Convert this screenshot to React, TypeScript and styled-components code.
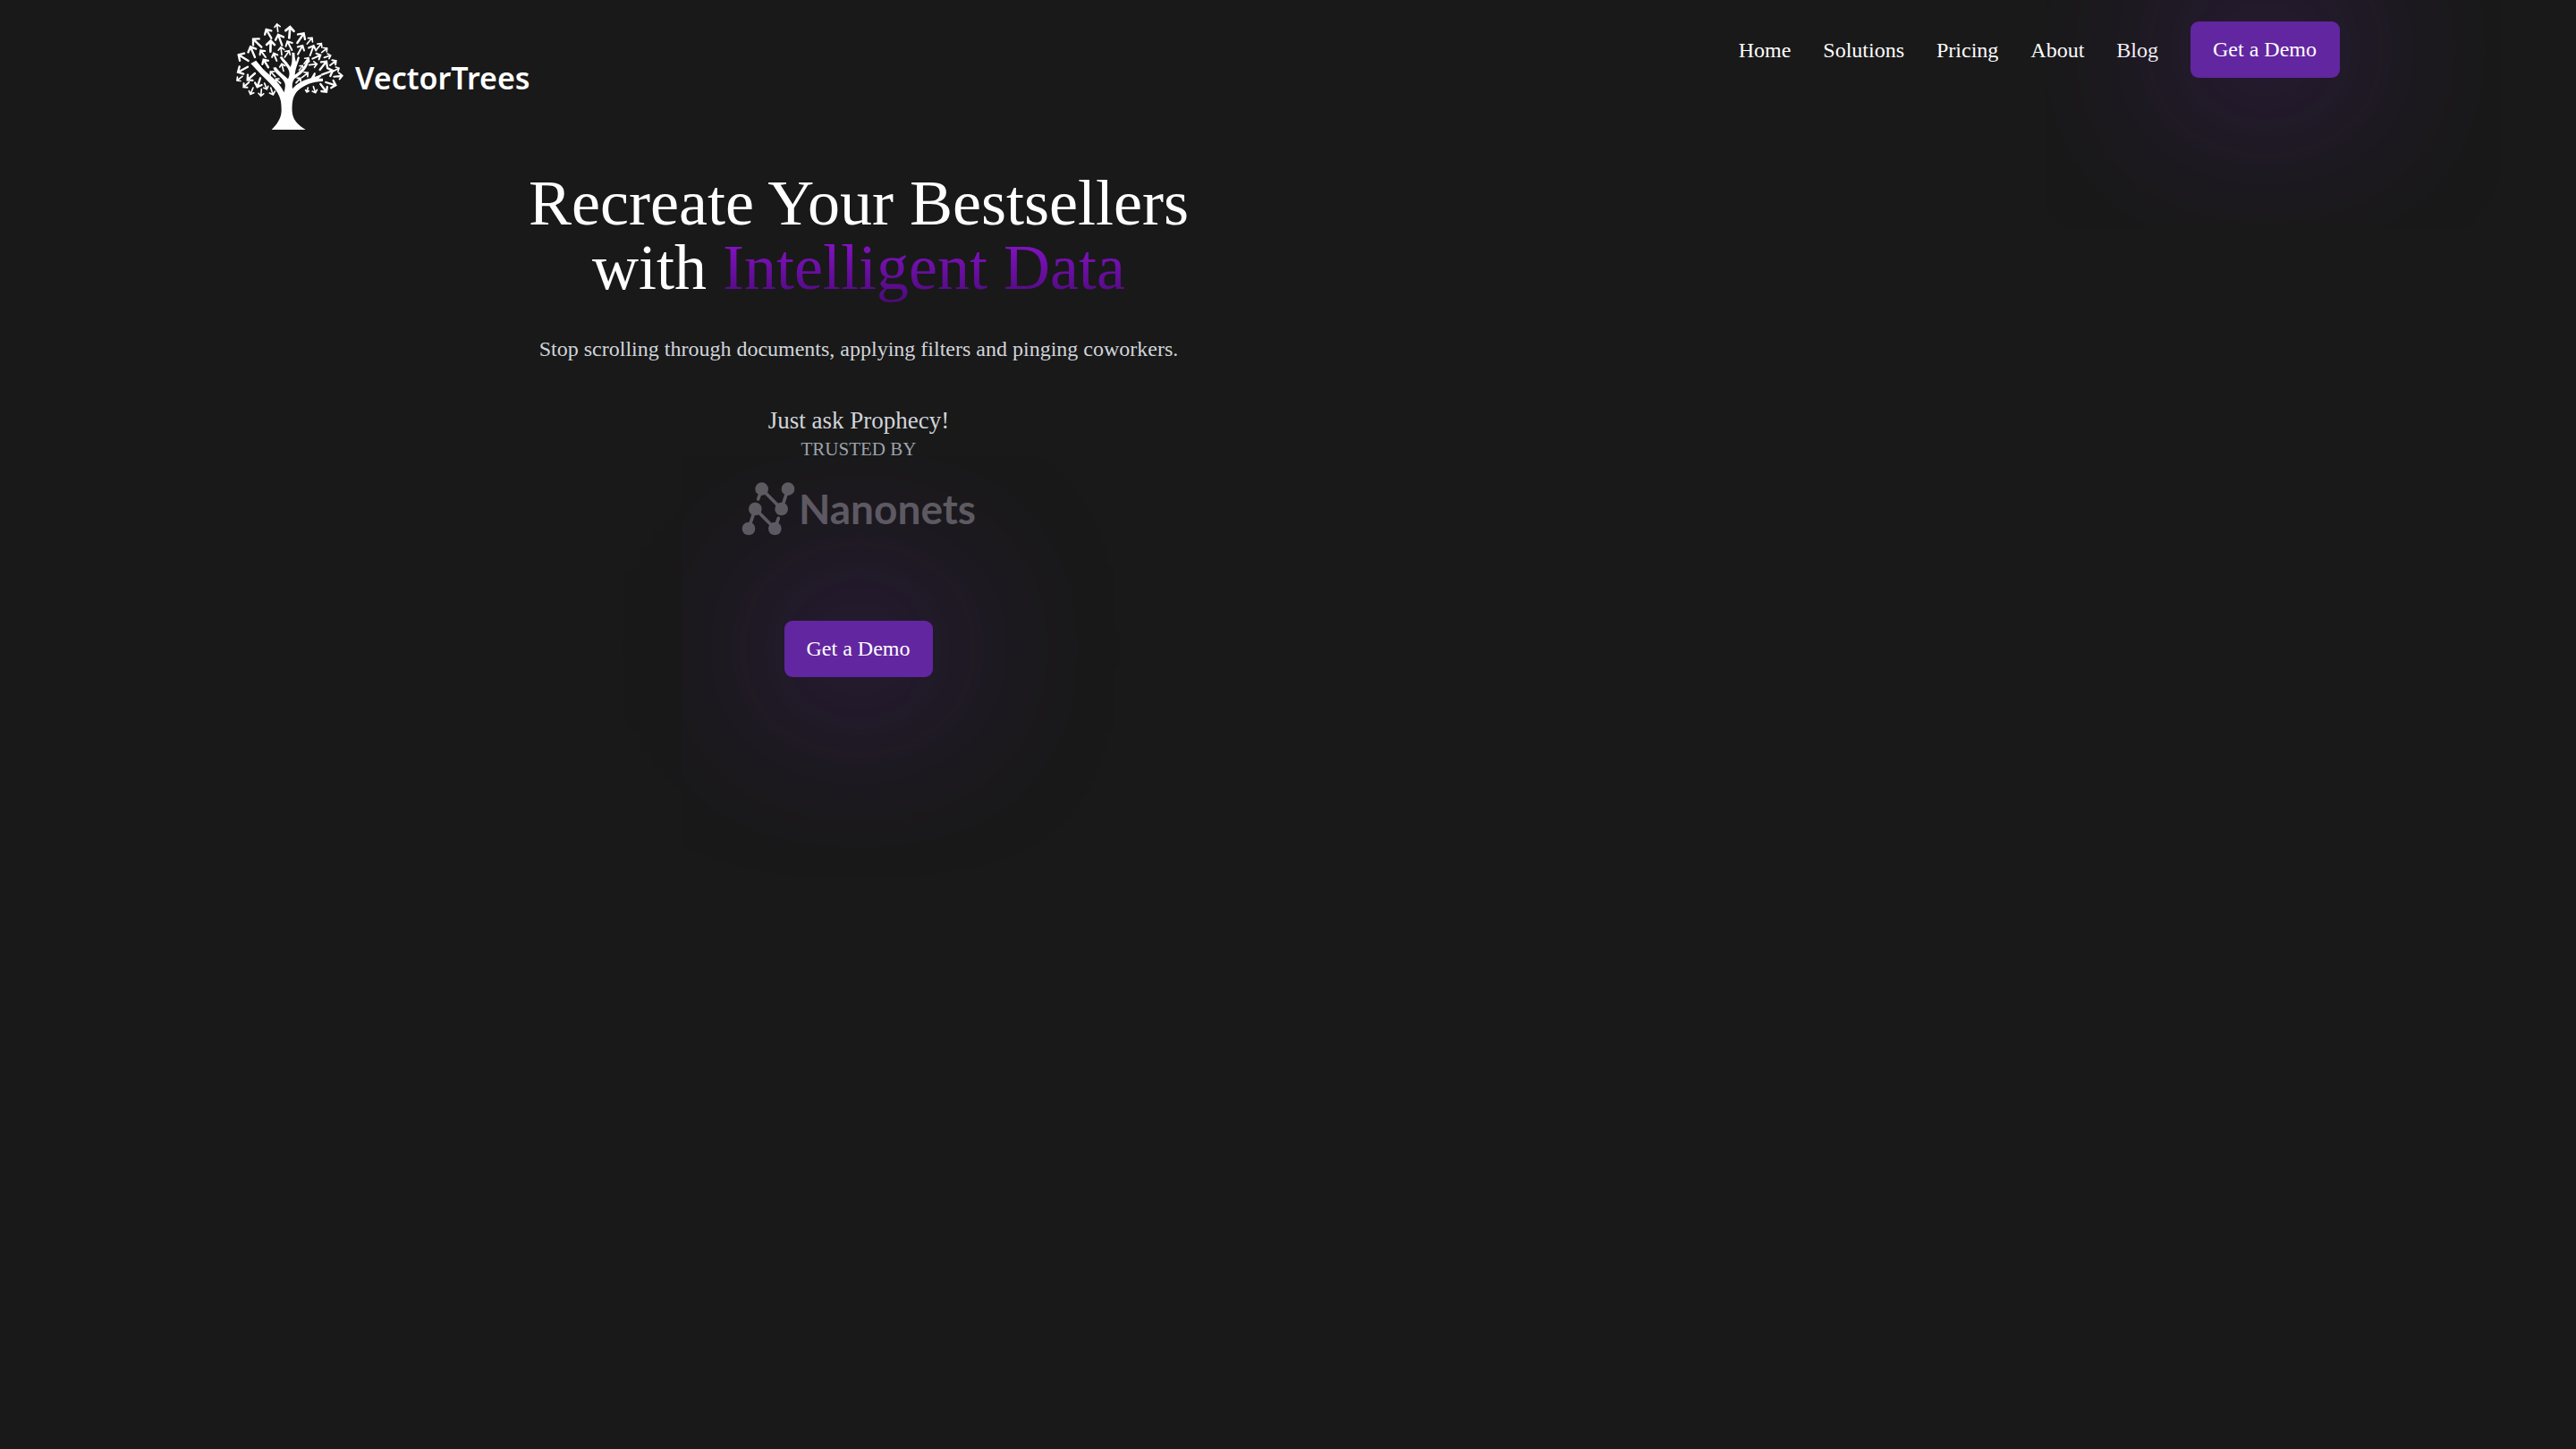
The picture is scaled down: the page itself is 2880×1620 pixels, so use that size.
import React from "react";
import styled, { createGlobalStyle } from "styled-components";

const GlobalStyle = createGlobalStyle`
  *, *::before, *::after { box-sizing: border-box; }
  body {
    margin: 0;
    background: #191919;
    color: #ffffff;
    font-family: "Liberation Serif", "Times New Roman", serif;
    font-size: 24px;
    line-height: 36px;
  }
`;

const Page = styled.div`
  min-height: 100vh;
  overflow: hidden;
`;

const Header = styled.header`
  display: flex;
  align-items: flex-start;
  justify-content: space-between;
  padding: 24px 264px 0;
`;

const Brand = styled.a`
  display: flex;
  align-items: center;
  gap: 13px;
  color: #ffffff;
  text-decoration: none;
`;

const TreeMark = styled.svg`
  display: block;
  width: 120px;
  height: 122px;
`;

const BrandName = styled.span`
  padding-top: 4px;
  font-family: "Noto Sans", sans-serif;
  font-weight: 600;
  font-size: 34px;
  line-height: 46px;
`;

const Nav = styled.nav`
  display: flex;
  align-items: center;
  gap: 36px;
`;

const NavLink = styled.a`
  color: #ffffff;
  text-decoration: none;
`;

const DemoButton = styled.button`
  padding: 13px 26px 14px 25px;
  border: 0;
  border-radius: 9px;
  background: #6226a0;
  box-shadow: 0 0 195px #6226a0;
  color: #ffffff;
  font: inherit;
  cursor: pointer;
`;

const Columns = styled.main`
  display: grid;
  grid-template-columns: 2fr 1fr;
  padding-top: 45px;
`;

const Hero = styled.section`
  display: flex;
  flex-direction: column;
  align-items: center;
  text-align: center;
`;

const Title = styled.h1`
  margin: 0;
  font-weight: 400;
  font-size: 72px;
  line-height: 72px;
`;

const Accent = styled.span`
  background: linear-gradient(to bottom, #8e14d2, #4b0a78);
  background-clip: text;
  -webkit-background-clip: text;
  color: transparent;
`;

const Lead = styled.p`
  margin: 37px 0 0;
  color: #d1d5db;
`;

const Tagline = styled.p`
  margin: 45px 0 0;
  color: #d1d5db;
  font-size: 27px;
  line-height: 34px;
`;

const Trusted = styled.p`
  margin: 0;
  color: #9ca3af;
  font-size: 21px;
  line-height: 30px;
`;

const Customer = styled.div`
  display: flex;
  align-items: center;
  gap: 4px;
  margin: 22px 0 95px;
  color: #5e5c60;
`;

const NodesMark = styled.svg`
  display: block;
  width: 60px;
  height: 60px;
`;

const CustomerName = styled.span`
  font-family: Lato, sans-serif;
  font-weight: 700;
  font-size: 46px;
  line-height: 60px;
`;

// Each leaf: tip x, tip y, tail x, tail y, stroke width
const leaves: number[][] = [
  [164, 27, 167, 52, 5], [208, 36, 205, 73, 8], [128, 45, 145, 74, 7],
  [254, 58, 232, 90, 7], [282, 73, 265, 93, 5], [84, 77, 112, 104, 7],
  [168, 62, 181, 98, 7], [143, 83, 142, 119, 8], [199, 85, 214, 114, 6],
  [75, 103, 90, 138, 7], [109, 115, 126, 138, 6], [177, 104, 180, 130, 5],
  [205, 116, 190, 138, 5], [250, 99, 234, 128, 6], [287, 99, 275, 132, 6],
  [313, 92, 297, 112, 5], [332, 108, 314, 122, 5], [35, 130, 68, 150, 7],
  [153, 125, 163, 150, 6], [310, 131, 283, 143, 6], [344, 132, 322, 139, 5],
  [33, 188, 66, 170, 7], [119, 146, 135, 172, 7], [180, 160, 186, 184, 5],
  [270, 140, 255, 160, 5], [298, 161, 272, 164, 5], [330, 152, 308, 180, 7],
  [362, 150, 342, 165, 6], [30, 216, 48, 202, 5], [65, 214, 90, 192, 7],
  [52, 238, 70, 222, 6], [98, 238, 108, 208, 7], [75, 262, 84, 240, 5],
  [110, 268, 112, 245, 5], [130, 245, 122, 225, 5], [151, 264, 143, 240, 5],
  [142, 186, 158, 203, 5], [160, 211, 176, 225, 5], [351, 183, 315, 196, 7],
  [383, 200, 355, 203, 6], [372, 175, 352, 185, 5], [361, 232, 328, 222, 7],
  [330, 254, 310, 228, 7], [293, 257, 286, 236, 5], [264, 255, 268, 240, 5],
  [243, 208, 228, 224, 5], [268, 190, 248, 206, 5], [250, 166, 238, 182, 4],
];

const leafPath = ([x, y, tx, ty]: number[]) => {
  const length = Math.hypot(tx - x, ty - y);
  const angle = Math.atan2(ty - y, tx - x);
  const barb = length * 0.52;
  const ends = [angle - 0.8, angle + 0.8].map(
    (a) => `${(x + barb * Math.cos(a)).toFixed(1)} ${(y + barb * Math.sin(a)).toFixed(1)}`
  );
  return `M${tx} ${ty}L${x} ${y}M${ends[0]}L${x} ${y}L${ends[1]}`;
};

const Tree = () => (
  <TreeMark viewBox="27 18 360 366" fill="#ffffff" aria-hidden="true">
    <path d="M93 151 L101 143 L122 166 L118 176 Z" fill="#000000" />
    <g fill="none" stroke="#ffffff" strokeLinecap="round">
      {leaves.map((leaf, i) => (
        <path key={i} d={leafPath(leaf)} strokeWidth={leaf[4]} />
      ))}
    </g>
    <path d="M146 381 C163 364 178 344 179 318 C179 292 177 276 165 256 C151 233 130 215 112 197 L76 159 L94 149 L117 177 C136 197 166 213 188 256 C191 240 193 232 190 224 C182 207 167 198 157 187 L151 173 L160 171 C172 187 186 197 201 211 C209 196 206 184 198 172 C190 159 180 151 173 138 L181 135 C188 147 198 153 209 171 C216 158 215 139 214 122 L223 123 C224 132 223 140 228 154 L234 136 L240 138 C235 159 226 174 224 197 C243 184 260 168 265 142 L273 143 C268 171 253 190 222 211 C215 222 214 231 216 244 C230 227 252 215 278 208 L289 189 L294 191 L291 204 L311 196 L314 201 L304 209 L318 209 L318 219 C290 218 258 228 235 249 C216 267 214 291 215 321 C217 349 235 365 260 381 Z" />
  </TreeMark>
);

const Nodes = () => (
  <NodesMark viewBox="52 58 180 180" fill="currentColor" aria-hidden="true">
    <g fill="none" stroke="currentColor" strokeWidth="11" strokeLinecap="round">
      <path d="M120 81L108 115M120 81L186 148L208 81M76 214L98 148L164 214L176 179" />
    </g>
    <circle cx="120" cy="81" r="22" />
    <circle cx="208" cy="81" r="22" />
    <circle cx="98" cy="148" r="22" />
    <circle cx="186" cy="148" r="22" />
    <circle cx="76" cy="214" r="22" />
    <circle cx="164" cy="214" r="22" />
  </NodesMark>
);

const links = ["Home", "Solutions", "Pricing", "About", "Blog"];

export default function App() {
  return (
    <Page>
      <GlobalStyle />
      <Header>
        <Brand href="#">
          <Tree />
          <BrandName>VectorTrees</BrandName>
        </Brand>
        <Nav>
          {links.map((label) => (
            <NavLink key={label} href="#">{label}</NavLink>
          ))}
          <DemoButton type="button">Get a Demo</DemoButton>
        </Nav>
      </Header>
      <Columns>
        <Hero>
          <Title>
            Recreate Your Bestsellers
            <br />
            with <Accent>Intelligent Data</Accent>
          </Title>
          <Lead>Stop scrolling through documents, applying filters and pinging coworkers.</Lead>
          <Tagline>Just ask Prophecy!</Tagline>
          <Trusted>TRUSTED BY</Trusted>
          <Customer>
            <Nodes />
            <CustomerName>Nanonets</CustomerName>
          </Customer>
          <DemoButton type="button">Get a Demo</DemoButton>
        </Hero>
      </Columns>
    </Page>
  );
}
